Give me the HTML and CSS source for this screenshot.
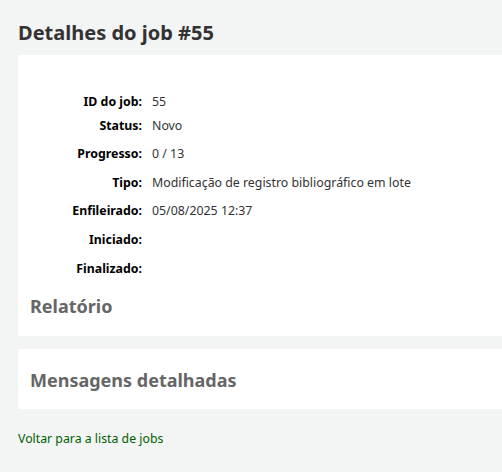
FILE: index.html
```html
<!DOCTYPE html>
<html lang="pt-BR">
<head>
<meta charset="utf-8">
<title>Detalhes do job #55</title>
<link rel="stylesheet" href="styles.css">
</head>
<body>
<main class="main">
  <h1 class="title">Detalhes do job #55</h1>
  <section class="panel panel-details">
    <ol class="rows">
      <li class="row row-first"><span class="label">ID do job:</span><span class="value">55</span></li>
      <li class="row row-second"><span class="label">Status:</span><span class="value">Novo</span></li>
      <li class="row"><span class="label">Progresso:</span><span class="value">0 / 13</span></li>
      <li class="row"><span class="label">Tipo:</span><span class="value">Modificação de registro bibliográfico em lote</span></li>
      <li class="row"><span class="label">Enfileirado:</span><span class="value">05/08/2025 12:37</span></li>
      <li class="row"><span class="label">Iniciado:</span><span class="value"></span></li>
      <li class="row"><span class="label">Finalizado:</span><span class="value"></span></li>
    </ol>
    <h2 class="subtitle">Relatório</h2>
  </section>
  <section class="panel panel-messages">
    <h2 class="subtitle">Mensagens detalhadas</h2>
  </section>
  <a class="back" href="#">Voltar para a lista de jobs</a>
</main>
</body>
</html>
```
FILE: styles.css
```css
html, body {
  margin: 0;
  padding: 0;
}
body {
  background: #f3f4f4;
  font-family: "Noto Sans", "Open Sans", sans-serif;
  color: #333;
  overflow: hidden;
}
.main {
  padding: 0 0 0 18px;
}
.title {
  margin: 0;
  padding-top: 20px;
  height: 55px;
  box-sizing: border-box;
  font-size: 20px;
  line-height: 26px;
  font-weight: 700;
  color: #333;
}
.panel {
  background: #fff;
}
.panel-details {
  height: 281px;
  padding-top: 36px;
  box-sizing: border-box;
}
.rows {
  list-style: none;
  margin: 0;
  padding: 0;
}
.row {
  display: flex;
  align-items: center;
  height: 28.75px;
  font-size: 12.35px;
}
.row-first {
  height: 21px;
}
.row-second {
  height: 27px;
}
.label {
  width: 124px;
  text-align: right;
  font-weight: 700;
  color: #000;
  flex: none;
}
.value {
  margin-left: 10px;
  color: #333;
}
.subtitle {
  margin: 0;
  padding-left: 12px;
  font-size: 18px;
  font-weight: 700;
  color: #666;
  line-height: 24px;
}
.panel-details .subtitle {
  padding-top: 11px;
}
.panel-messages {
  margin-top: 13px;
  height: 60px;
  padding-top: 19px;
  box-sizing: border-box;
}
.back {
  display: block;
  margin-top: 21px;
  font-size: 12.3px;
  color: #006100;
  text-decoration: none;
}
```
